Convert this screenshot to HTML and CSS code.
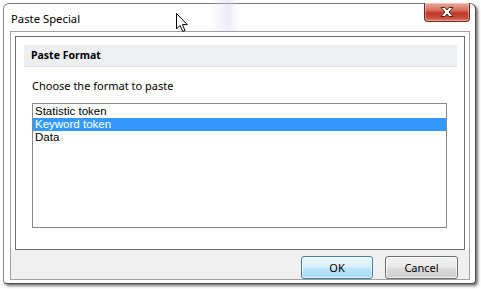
FILE: index.html
```html
<!DOCTYPE html>
<html>
<head>
<meta charset="utf-8">
<link rel="stylesheet" href="styles.css">
</head>
<body>
<div class="window">
  <div class="titlebar">
    <span class="title">Paste Special</span>
    <div class="close">
      <svg width="18" height="12" viewBox="0 0 18 12">
        <path d="M3 1.5 H7 L9 4 L11 1.5 H15 L11 6 L15 10.5 H11 L9 8 L7 10.5 H3 L7 6 Z" fill="#fff" stroke="#4a2a26" stroke-width="1" stroke-linejoin="round"/>
      </svg>
    </div>
  </div>
  <div class="client">
    <div class="content">
      <div class="panel">
        <div class="panel-head">Paste Format</div>
        <div class="panel-body">
          <div class="prompt">Choose the format to paste</div>
          <div class="listbox">
            <div class="item"><span>Statistic token</span></div>
            <div class="item selected"><span>Keyword token</span></div>
            <div class="item"><span>Data</span></div>
          </div>
        </div>
      </div>
    </div>
    <div class="buttons">
      <button class="btn default">OK</button>
      <button class="btn">Cancel</button>
    </div>
  </div>
</div>
<div class="glass"></div>
<svg class="cursor" width="15" height="21" viewBox="0 0 15 21">
  <path d="M1.5 1.5 V17 L5 13.5 L7.7 19.5 L10 18.5 L7.4 12.6 H12.3 Z" fill="#fff" stroke="#000" stroke-width="1" stroke-linejoin="miter"/>
</svg>
</body>
</html>
```
FILE: styles.css
```css
html, body {
  margin: 0;
  padding: 0;
  background: #ffffff;
  width: 481px;
  height: 289px;
  overflow: hidden;
  position: relative;
  font-family: "Noto Sans", "Open Sans", sans-serif;
  font-size: 11px;
  color: #000;
}
.glass {
  position: absolute;
  left: 210px;
  top: 0;
  width: 30px;
  height: 31px;
  background: linear-gradient(90deg, rgba(215,215,240,0) 0%, rgba(215,215,240,0.45) 60%, rgba(215,215,240,0) 100%);
}
.window {
  position: relative;
  margin: 3px 0 0 3px;
  width: 473px;
  height: 281px;
  box-sizing: border-box;
  border: 1px solid #4a4a4a;
  border-left-color: #8a8a8a;
  border-top-color: #7a7a7a;
  border-radius: 6px 6px 4px 4px;
  background: #ffffff;
  box-shadow: 2px 2px 3px rgba(0,0,0,0.55);
  padding: 0 5px 6px 6px;
  display: flex;
  flex-direction: column;
}
.titlebar {
  height: 27px;
  display: flex;
  justify-content: space-between;
  align-items: flex-start;
  flex: none;
}
.title {
  margin: 7px 0 0 1px;
  font-size: 11.3px;
  line-height: 16px;
  color: #000;
}
.close {
  margin-top: -1px;
  width: 46px;
  height: 19px;
  box-sizing: border-box;
  border: 1px solid #6b2a20;
  border-top: none;
  border-radius: 0 0 4px 4px;
  background: linear-gradient(180deg, #e9a99c 0%, #d8705d 40%, #c0392a 55%, #c94a36 80%, #dc7d68 100%);
  display: flex;
  align-items: center;
  justify-content: center;
  box-shadow: inset 0 0 0 1px rgba(255,255,255,0.35);
}
.client {
  flex: 1;
  border: 1px solid #a0a0a0;
  background: #f0f0f0;
  display: flex;
  flex-direction: column;
}
.content {
  background: #ffffff;
  padding: 4px 4px 0 4px;
}
.panel {
  border: 1px solid #6f6f6f;
  height: 204px;
  background: #fff;
  padding: 8px 7px 0 8px;
}
.panel-head {
  background: #eeeff3;
  border-bottom: 1px solid #e2e3ea;
  height: 21px;
  padding-left: 7px;
  font-weight: bold;
  font-size: 10.5px;
  line-height: 21px;
}
.panel-body {
  padding: 0 10px 0 8px;
}
.prompt {
  margin-top: 11px;
  line-height: 16px;
  height: 16px;
}
.listbox {
  margin-top: 9px;
  height: 125px;
  box-sizing: border-box;
  border: 1px solid #828790;
  padding: 1px 0 0 0;
}
.item {
  height: 13px;
  padding-left: 2px;
  font-family: "Liberation Sans", Arial, sans-serif;
  font-size: 11.5px;
}
.item span {
  display: block;
  height: 13px;
  line-height: 13px;
}
.item.selected {
  background: #3399ff;
  color: #fff;
}
.buttons {
  flex: 1;
  display: flex;
  justify-content: flex-end;
  align-items: flex-start;
  padding: 6px 11px 0 0;
  gap: 12px;
}
.btn {
  width: 73px;
  height: 23px;
  box-sizing: border-box;
  border: 1px solid #707070;
  border-radius: 3px;
  background: linear-gradient(180deg, #f2f2f2 0%, #ebebeb 48%, #dddddd 52%, #cfcfcf 100%);
  font-family: "Noto Sans", "Open Sans", sans-serif;
  font-size: 11px;
  color: #000;
  padding: 0;
  box-shadow: inset 0 0 0 1px rgba(255,255,255,0.7);
}
.btn.default {
  width: 72px;
  border-color: #3c7fb1;
  background: linear-gradient(180deg, #eaf6fd 0%, #d9f0fc 48%, #bee6fd 52%, #a7d9f5 100%);
}
.cursor {
  position: absolute;
  left: 175px;
  top: 12px;
}
```
